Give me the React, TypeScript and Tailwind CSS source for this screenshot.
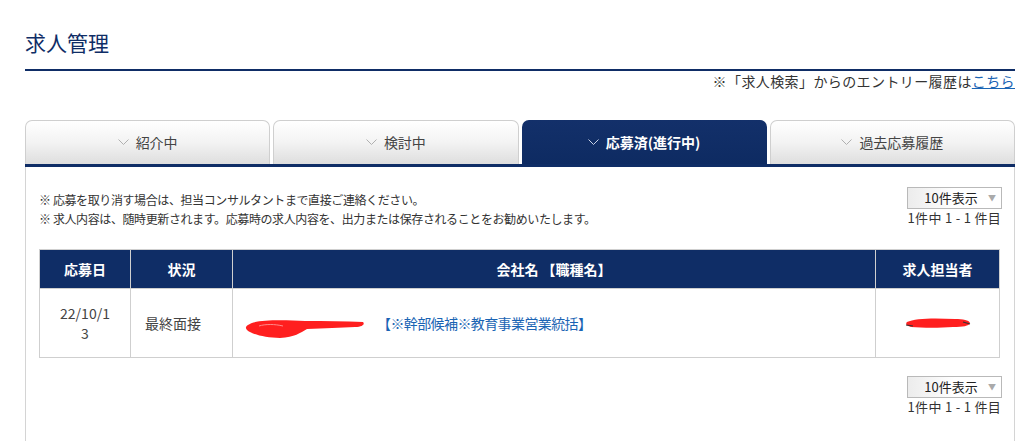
import React from "react";

const font = { fontFamily: '"Noto Sans CJK JP", "Noto Sans", sans-serif' };

function Chevron({ color }: { color: string }) {
  return (
    <svg width="11" height="7" viewBox="0 0 11 7" className="mr-[7px]">
      <polyline points="0.5,0.5 5.5,5.5 10.5,0.5" fill="none" stroke={color} strokeWidth="1" />
    </svg>
  );
}

function Tab({ label, active }: { label: string; active?: boolean }) {
  return (
    <div
      className={
        active
          ? "flex h-[44px] items-center justify-center rounded-t-[7px] bg-gradient-to-b from-[#13306a] to-[#0e2b62] text-[14px] font-bold text-white"
          : "flex h-[44px] items-center justify-center rounded-t-[7px] border border-b-0 border-[#cfcfcf] bg-gradient-to-b from-[#ffffff] via-[#f3f3f3] to-[#dedede] text-[14px] text-[#444]"
      }
    >
      <Chevron color={active ? "#c9d2e6" : "#b0b0b0"} />
      {label}
    </div>
  );
}

function Pager() {
  return (
    <div className="flex flex-col items-end">
      <div className="mr-[-1px] flex h-[22px] w-[95px] items-center border border-[#b9b9b9] bg-gradient-to-r from-[#ececec] via-[#ffffff] to-[#ffffff] text-[13px] text-[#222]">
        <span className="flex-1 pl-[6px] text-center">10件表示</span>
        <span className="pr-[5px] text-[8px] text-[#aaa]">▼</span>
      </div>
      <div className="mt-[1px] text-[13px] leading-[16px] tracking-[0.3px] text-[#333]">1件中 1 - 1 件目</div>
    </div>
  );
}

function Scribble({ w, h, kind }: { w: number; h: number; kind: "company" | "person" }) {
  if (kind === "company") {
    return (
      <svg width={w} height={h} viewBox="0 0 120 24">
        <path
          d="M3,10 C10,4 40,5 60,6 C80,6 100,6 118,7 C120,9 118,12 110,12 C95,13 80,13 62,14 C55,18 50,22 35,23 C20,23 6,19 2,15 C0,13 1,11 3,10 Z"
          fill="#ff1f1f"
        />
        <path d="M14,11 C20,9 30,9 38,11" stroke="#ff8a8a" strokeWidth="1" fill="none" />
      </svg>
    );
  }
  return (
    <svg width={w} height={h} viewBox="0 0 66 14">
      <path
        d="M2,6 C10,2 30,2 50,3 C58,3 64,4 65,7 C64,10 58,11 48,11 C35,12 18,12 6,11 C2,10 0,8 2,6 Z"
        fill="#ff1f1f"
      />
      <path d="M1,9 L8,10 M58,6 L65,8" stroke="#333" strokeWidth="1.2" />
    </svg>
  );
}

export default function App() {
  return (
    <div className="min-h-[441px] w-[1033px] bg-white" style={font}>
      <div className="ml-[25px] w-[990px]">
        <h1 className="border-b-2 border-[#0f2d66] pt-[28px] pb-[13px] text-[21px] leading-[28px] text-[#0f2d66]">
          求人管理
        </h1>
        <div className="text-right text-[14px] leading-[20px] tracking-[0.4px] text-[#333]">
          ※「求人検索」からのエントリー履歴は
          <a className="text-[#1a64b4] underline">こちら</a>
        </div>

        <div className="mt-[29px] grid grid-cols-4 gap-x-[3px]">
          <Tab label="紹介中" />
          <Tab label="検討中" />
          <Tab label="応募済(進行中)" active />
          <Tab label="過去応募履歴" />
        </div>
        <div className="h-[3px] bg-[#0f2d66]" />

        <div className="min-h-[280px] border-x border-[#d4d4d4] px-[13px] pb-[20px]">
          <div className="flex items-start justify-between pt-[20px]">
            <div className="pt-[3px] text-[12px] leading-[19px] tracking-[-0.4px] text-[#333]">
              <p>※ 応募を取り消す場合は、担当コンサルタントまで直接ご連絡ください。</p>
              <p>※ 求人内容は、随時更新されます。応募時の求人内容を、出力または保存されることをお勧めいたします。</p>
            </div>
            <Pager />
          </div>

          <table className="mt-[21px] w-[961px] border-collapse text-[14px]">
            <thead>
              <tr className="h-[39px] bg-[#0f2d66] font-bold text-white">
                <th className="w-[91px] border border-[#cfcfcf] font-bold">応募日</th>
                <th className="w-[102px] border border-[#cfcfcf] font-bold">状況</th>
                <th className="border border-[#cfcfcf] font-bold">会社名 【職種名】</th>
                <th className="w-[124px] border border-[#cfcfcf] font-bold">求人担当者</th>
              </tr>
            </thead>
            <tbody>
              <tr className="h-[69px] text-[#444]">
                <td className="border border-[#cfcfcf] px-[14px] text-center leading-[20px] break-all">
                  22/10/1
                  <br />3
                </td>
                <td className="border border-[#cfcfcf] px-[14px]">最終面接</td>
                <td className="border border-[#cfcfcf] px-[12px]">
                  <div className="flex items-center">
                    <span className="mt-[8px]">
                      <Scribble w={120} h={24} kind="company" />
                    </span>
                    <a className="ml-[12px] tracking-[-0.6px] text-[#1a64b4]">【※幹部候補※教育事業営業統括】</a>
                  </div>
                </td>
                <td className="border border-[#cfcfcf]">
                  <div className="flex justify-center">
                    <Scribble w={66} h={14} kind="person" />
                  </div>
                </td>
              </tr>
            </tbody>
          </table>

          <div className="mt-[18px] flex justify-end">
            <Pager />
          </div>
        </div>
      </div>
    </div>
  );
}
